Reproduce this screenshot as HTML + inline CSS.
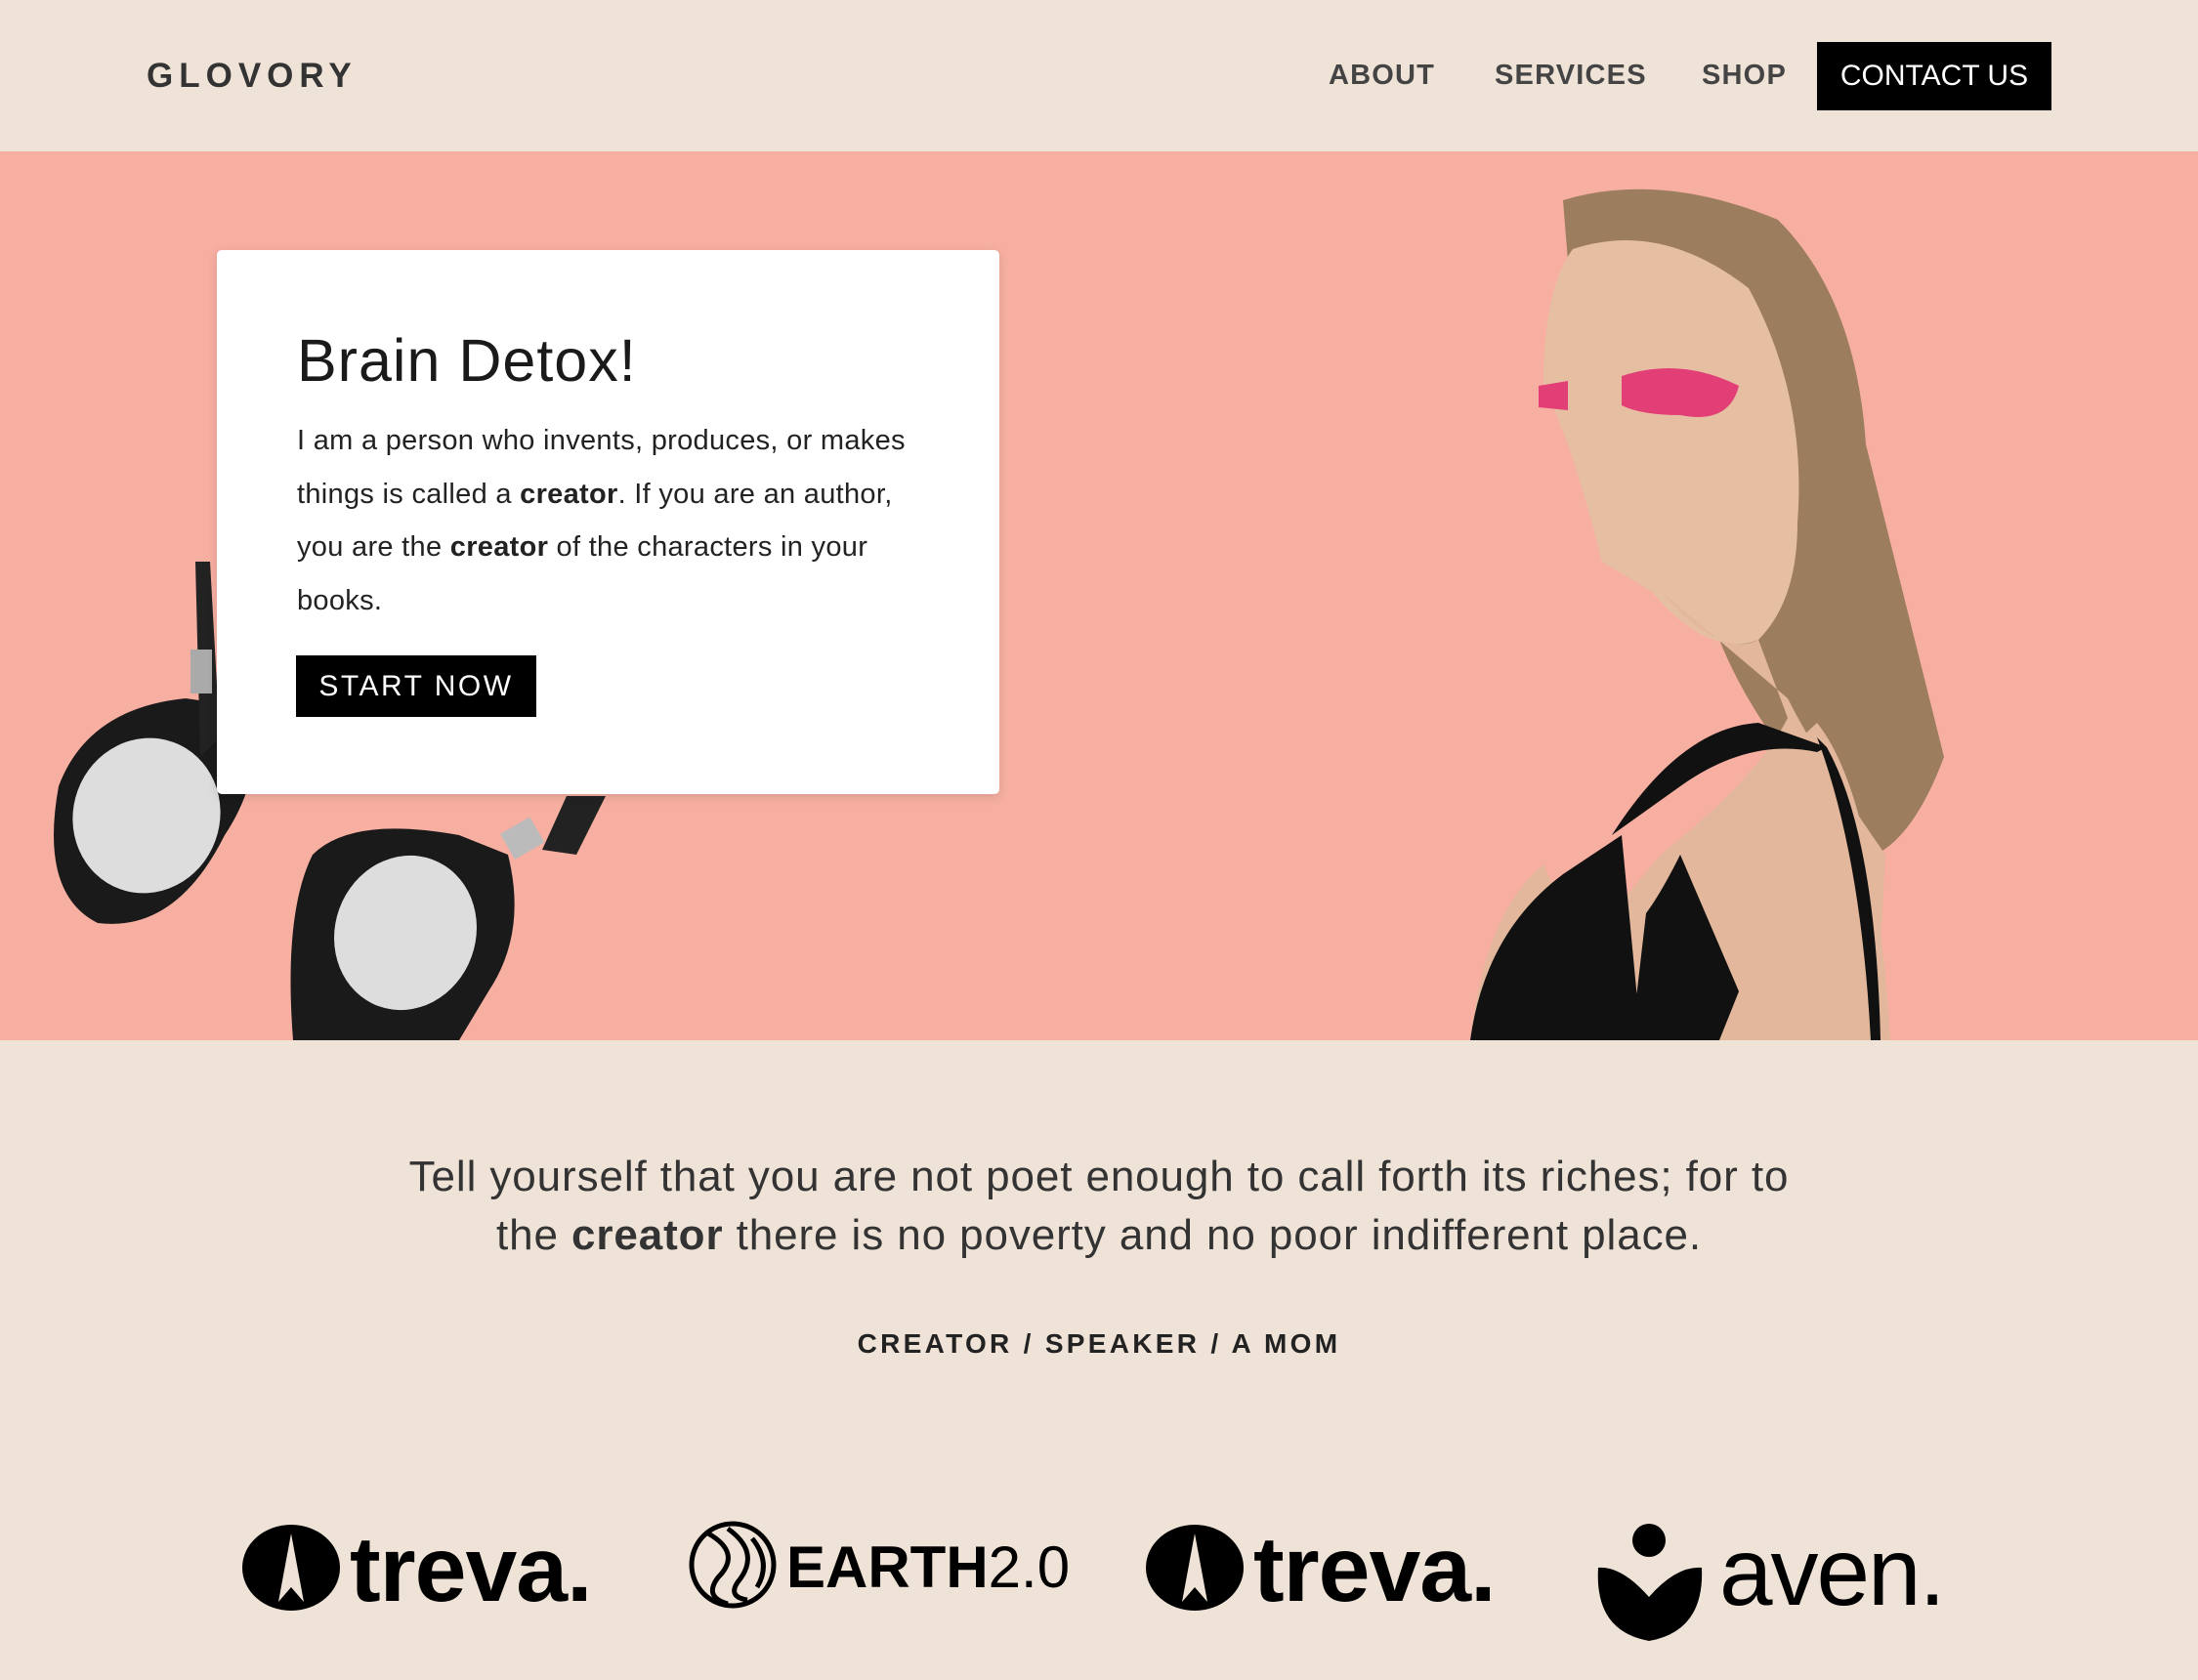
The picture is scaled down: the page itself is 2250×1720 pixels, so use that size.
<!DOCTYPE html>
<html><head><meta charset="utf-8"><style>
*{margin:0;padding:0;box-sizing:border-box}
body{width:2250px;height:1700px;overflow:hidden;background:#efe3d8;font-family:"Liberation Sans",sans-serif;color:#222;position:relative}
b{font-weight:700}
.hdr{position:absolute;left:0;top:0;width:2250px;height:155px;background:#efe3d8}
.logo{position:absolute;left:150px;top:58px;font-size:35px;letter-spacing:6px;font-weight:bold;color:#333}
.nav{position:absolute;top:61px;font-size:29px;letter-spacing:1.2px;color:#444;font-weight:bold}
.cta{position:absolute;left:1860px;top:43px;width:240px;height:70px;background:#000;color:#fff;font-size:30px;display:flex;align-items:center;justify-content:center}
.hero{position:absolute;left:0;top:155px;width:2250px;height:910px;background:#f7afa1;overflow:hidden}
.card{position:absolute;left:222px;top:101px;width:801px;height:557px;background:#fff;border-radius:5px;box-shadow:0 3px 10px rgba(0,0,0,.12)}
.card h1{position:absolute;left:82px;top:78px;font-size:61px;font-weight:normal;letter-spacing:1px;color:#1a1a1a}
.card p{position:absolute;left:82px;top:168px;width:650px;font-size:29px;line-height:54.5px;color:#222;letter-spacing:.3px}
.btn{position:absolute;left:81px;top:415px;width:246px;height:63px;background:#000;color:#fff;font-size:30px;letter-spacing:2.5px;display:flex;align-items:center;justify-content:center}
.quote{position:absolute;left:0;top:1175px;width:2250px;text-align:center;font-size:44px;line-height:60px;color:#333;letter-spacing:.9px}
.roles{position:absolute;left:0;top:1360px;width:2250px;text-align:center;font-size:28px;font-weight:bold;letter-spacing:3.3px;color:#222}
.brand{position:absolute;font-weight:bold;color:#000}
</style></head><body>
<div class="hdr">
<div class="logo">GLOVORY</div>
<div class="nav" style="left:1360px">ABOUT</div>
<div class="nav" style="left:1530px">SERVICES</div>
<div class="nav" style="left:1742px">SHOP</div>
<div class="cta">CONTACT US</div>
</div>
<div class="hero">
<svg width="2250" height="910" style="position:absolute;left:0;top:0">
<g>
<path d="M60 650 Q90 570 190 560 L260 570 Q270 640 230 700 Q180 800 100 790 Q40 760 60 650Z" fill="#1a1a1a"/>
<ellipse cx="150" cy="680" rx="75" ry="80" fill="#ddd" transform="rotate(20 150 680)"/>
<path d="M200 420 L215 420 L225 600 L205 620Z" fill="#222"/>
<rect x="195" y="510" width="22" height="45" fill="#aaa"/>
<path d="M320 720 Q360 680 470 700 L520 720 Q540 800 500 860 L470 910 L300 910 Q290 780 320 720Z" fill="#1a1a1a"/>
<ellipse cx="415" cy="800" rx="72" ry="80" fill="#ddd" transform="rotate(20 415 800)"/>
<path d="M580 660 L620 660 L590 720 L555 715Z" fill="#222"/>
<rect x="515" y="690" width="35" height="30" fill="#bbb" transform="rotate(-30 530 700)"/>
</g>
<path d="M1600 50 Q1700 20 1820 70 Q1900 150 1910 300 Q1960 500 1990 620 Q1960 700 1920 720 L1900 700 Q1800 600 1760 500 L1620 300 Z" fill="#9c7d5e"/>
<path d="M1610 100 Q1700 70 1790 140 Q1850 250 1840 380 Q1840 460 1800 500 Q1750 520 1690 450 L1640 420 Q1610 300 1580 240 Q1580 140 1610 100Z" fill="#e6bfa3"/>
<path d="M1700 450 Q1760 520 1800 500 L1830 580 Q1800 640 1700 720 L1650 780 L1760 900 L1920 910 L1930 720 Q1860 620 1830 560Z" fill="#e2b79b"/>
<path d="M1640 870 Q1680 760 1760 700 Q1800 640 1860 585 Q1920 660 1935 910 L1505 910 Q1520 780 1580 730Z" fill="#e2b79b"/>
<path d="M1505 910 Q1520 800 1600 740 L1660 700 L1680 910Z" fill="#111"/>
<path d="M1670 910 L1685 780 Q1700 760 1720 720 L1780 860 L1760 910Z" fill="#111"/>
<path d="M1650 700 Q1720 590 1800 585 L1870 610 L1860 615 Q1790 600 1720 650Z" fill="#111"/>
<path d="M1860 600 L1870 610 Q1920 700 1925 910 L1915 910 Q1905 720 1860 600Z" fill="#111"/>
<path d="M1660 230 Q1720 210 1780 240 Q1770 280 1720 270 Q1680 270 1660 260Z" fill="#e23f76"/>
<path d="M1575 240 L1605 235 L1605 265 L1575 262Z" fill="#e23f76"/>
</svg>
<div class="card">
<h1>Brain Detox!</h1>
<p>I am a person who invents, produces, or makes things is called a <b>creator</b>. If you are an author, you are the <b>creator</b> of the characters in your books.</p>
<div class="btn">START NOW</div>
</div>
</div>
<div class="quote">Tell yourself that you are not poet enough to call forth its riches; for to<br>the <b>creator</b> there is no poverty and no poor indifferent place.</div>
<div class="roles">CREATOR / SPEAKER / A MOM</div>
<svg width="2250" height="200" style="position:absolute;left:0;top:1520px">
<g fill="#000">
<ellipse cx="298" cy="85" rx="50" ry="44"/>
<path d="M298 50 L285 120 L298 105 L311 120Z" fill="#efe3d8"/>
<ellipse cx="1223" cy="85" rx="50" ry="44"/>
<path d="M1223 50 L1210 120 L1223 105 L1236 120Z" fill="#efe3d8"/>
<circle cx="750" cy="82" r="42" fill="none" stroke="#000" stroke-width="5"/>
<path d="M725 50 Q760 70 735 95 Q720 115 745 122 M745 45 Q780 70 755 100 Q745 115 765 118 M770 55 Q790 80 775 105" fill="none" stroke="#000" stroke-width="5"/>
<circle cx="1688" cy="57" r="17"/>
<path d="M1636 85 Q1660 83 1688 115 Q1716 83 1742 85 Q1745 150 1688 160 Q1632 150 1636 85Z"/>
</g>
</svg>
<div class="brand" style="left:358px;top:1553px;font-size:95px;letter-spacing:-1px">treva.</div>
<div class="brand" style="left:805px;top:1570px;font-size:60px">EARTH<span style="font-weight:normal">2.0</span></div>
<div class="brand" style="left:1283px;top:1553px;font-size:95px;letter-spacing:-1px">treva.</div>
<div class="brand" style="left:1760px;top:1553px;font-size:98px;font-weight:normal;letter-spacing:-2px">aven.</div>
</body></html>
